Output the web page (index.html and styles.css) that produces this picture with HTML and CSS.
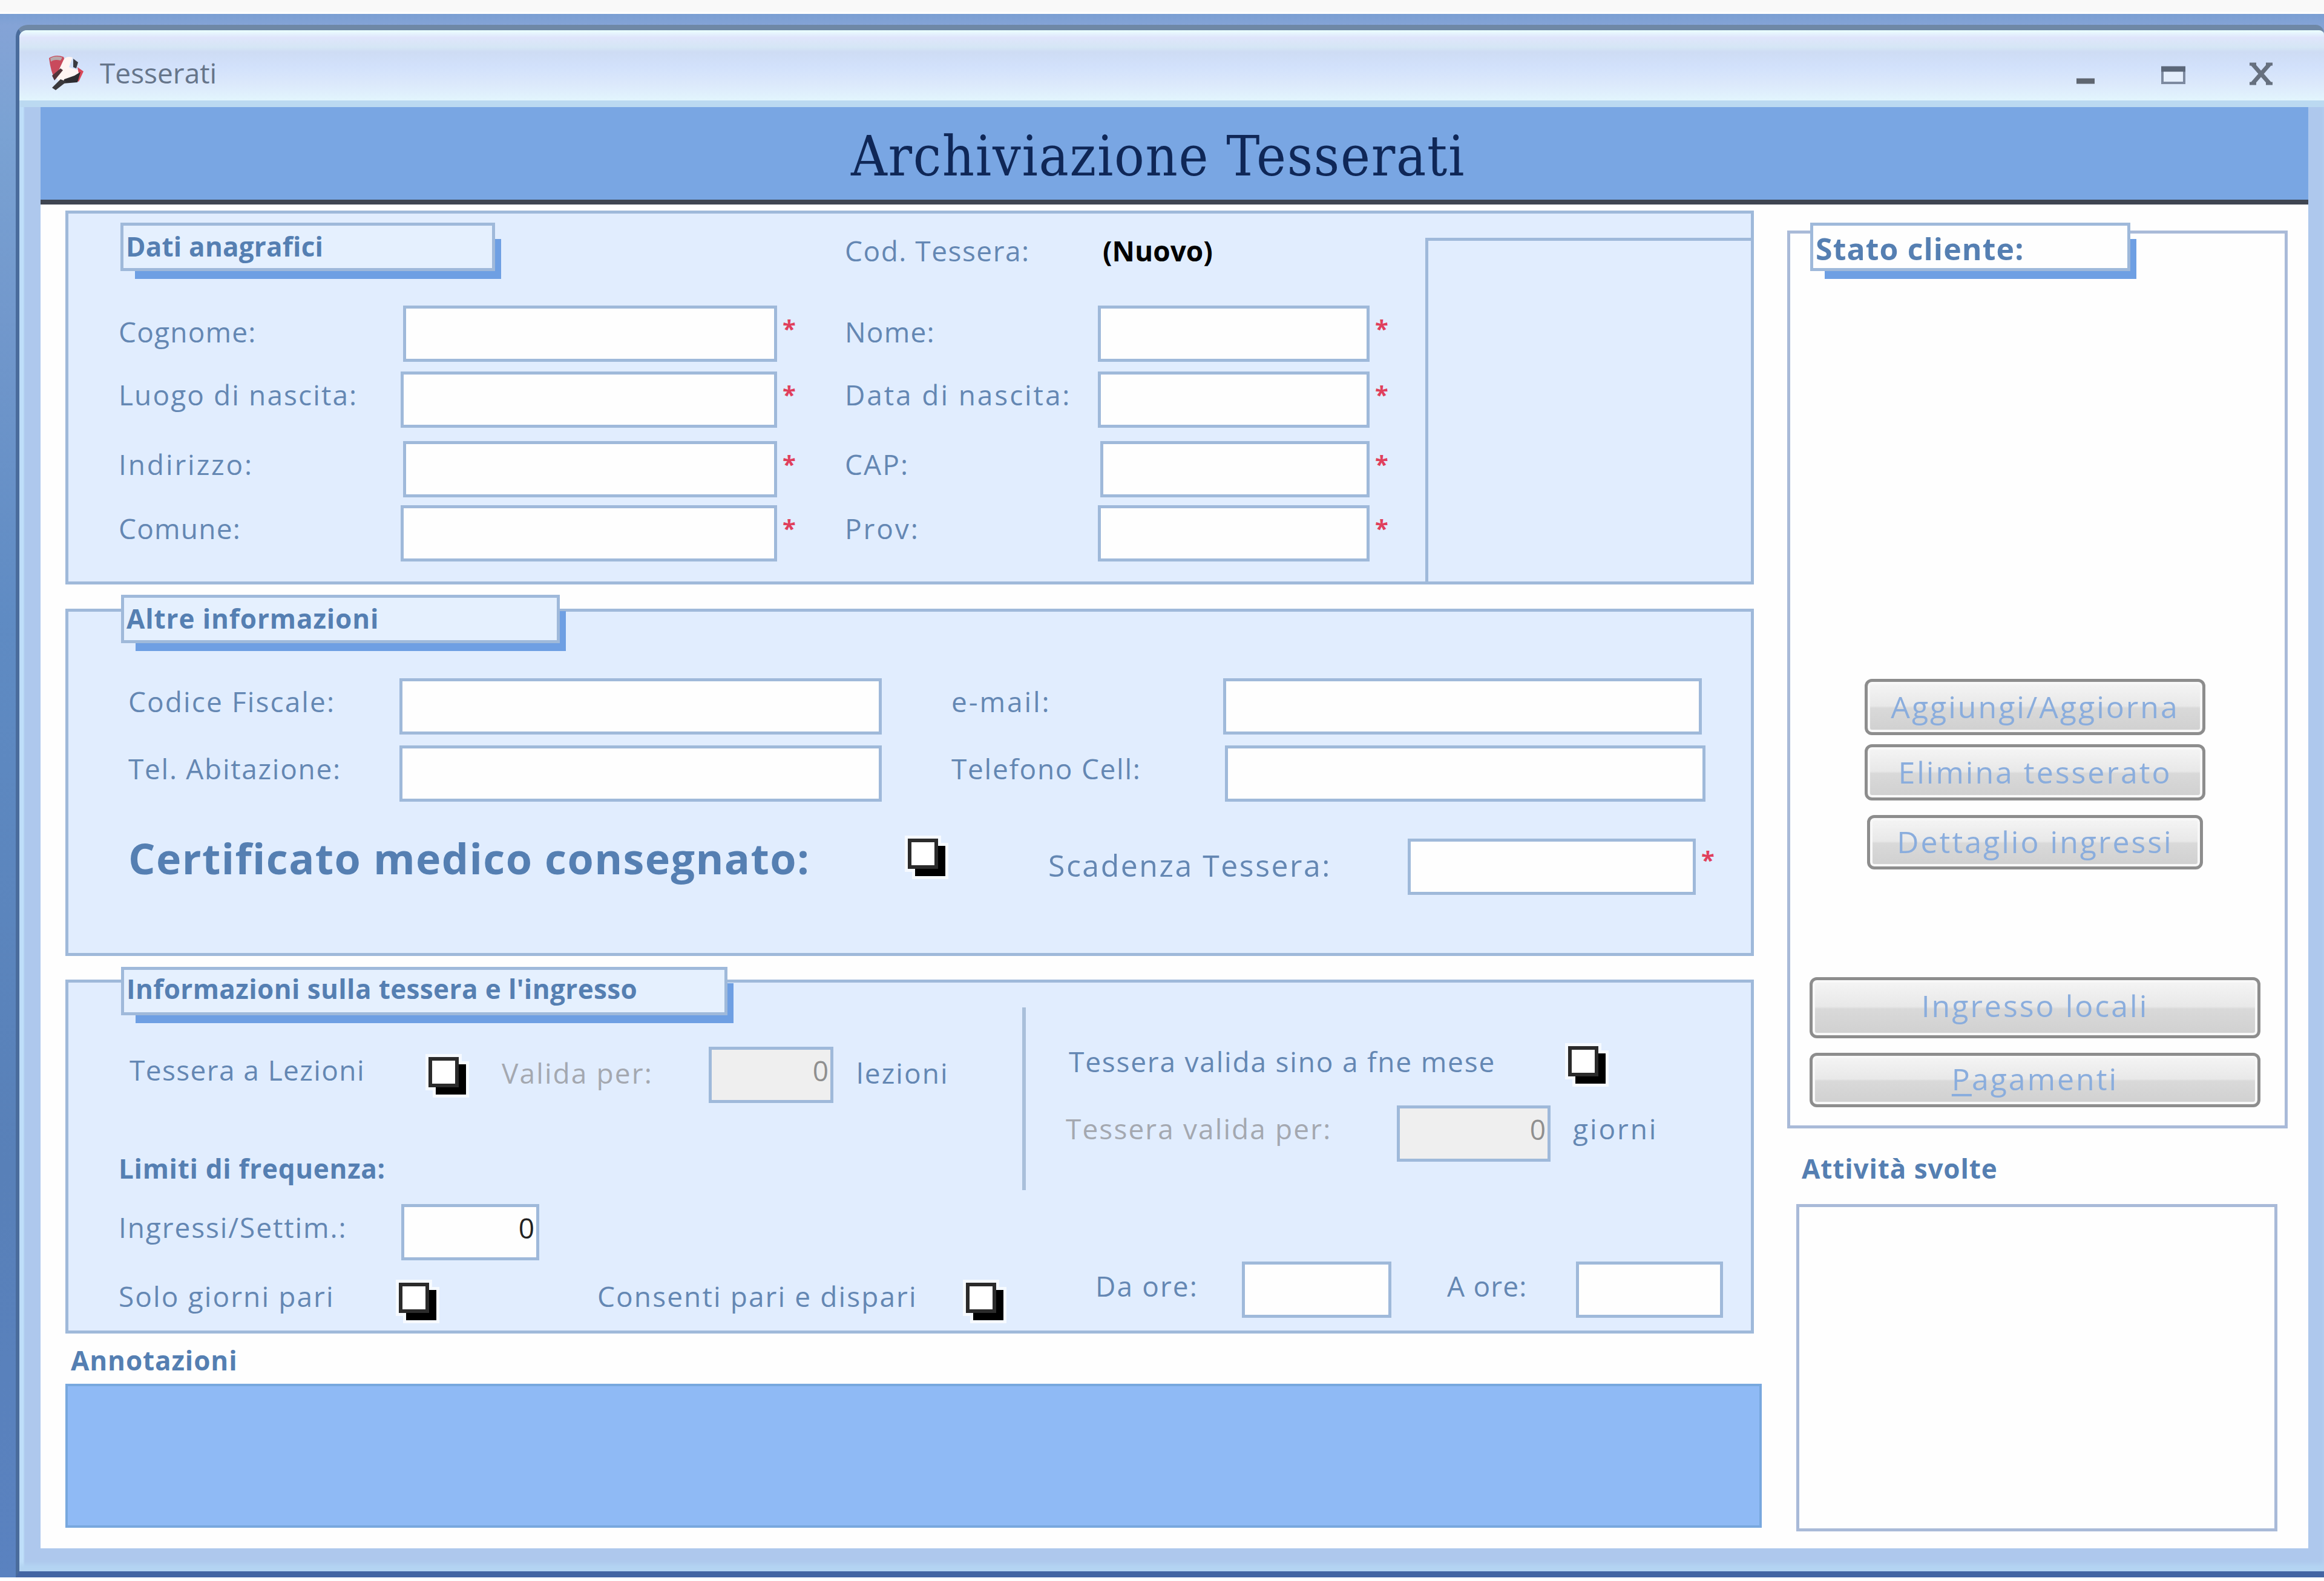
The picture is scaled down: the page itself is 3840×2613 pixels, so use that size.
FILE: index.html
```
<!DOCTYPE html>
<html lang="it">
<head>
	<meta charset="utf-8">
	<title>Tesserati</title>
	<link rel="stylesheet" href="styles.css">
</head>
<body>
	<div class="desktop">
		<div class="window">
			<div class="titlebar">
				<svg class="app-icon" viewBox="0 0 60 60">
					<path d="M3 7 Q14 0 27 5 L34 28 L12 40 Q6 30 3 7Z" fill="#c94a5c"/>
					<path d="M5 7 Q14 2 25 6 L22 11 Q12 8 6 13Z" fill="#b9a9ac"/>
					<path d="M27 10 Q31 3 42 6 L36 22 L54 28 L50 42 L20 46 L14 38Z" fill="#fff5f3"/>
					<path d="M43 8 L51 14 L48 24 L43 22Z" fill="#3a3a40"/>
					<path d="M50 22 L60 29 L52 46 L44 42 L52 32Z" fill="#d8485a"/>
					<path d="M28 42 L45 36 L55 30 L50 47 L26 49Z" fill="#2e2c30"/>
					<path d="M22 42 L32 46 L14 60 L8 56Z" fill="#3a383c"/>
					<path d="M8 36 L22 24 L26 27 L12 44Z" fill="#51343a"/>
				</svg>
				<span class="caption">Tesserati</span>
				<div class="controls">
					<svg class="ctl" viewBox="0 0 44 44"><path d="M7 34H37" stroke="#5f6670" stroke-width="9"/></svg>
					<svg class="ctl" viewBox="0 0 44 44"><path d="M4 14H40V37H4Z" fill="#e4eefc" stroke="#7d8aa0" stroke-width="4"/><path d="M2 14H42" stroke="#5b6779" stroke-width="9"/></svg>
					<svg class="ctl" viewBox="0 0 44 44"><path d="M8 6L36 38M36 6L8 38" stroke="#66707f" stroke-width="7"/><path d="M3 6H14M30 6H41M3 38H14M30 38H41" stroke="#66707f" stroke-width="5"/></svg>
				</div>
			</div>
			<div class="client">
				<h1>Archiviazione Tesserati</h1>
				<div class="form">
					<div class="left">
						<section class="panel personal">
							<h2 class="tag tag-personal">Dati anagrafici</h2>
							<label class="code-label">Cod. Tessera:</label>
							<b class="code">(Nuovo)</b>

							<label class="tight first start">Cognome:</label>
							<div class="field shift"></div>
							<i class="star">*</i>
							<label class="tight first">Nome:</label>
							<div class="field"></div>
							<i class="star">*</i>

							<label class="start">Luogo di nascita:</label>
							<div class="field"></div>
							<i class="star">*</i>
							<label class="wide">Data di nascita:</label>
							<div class="field"></div>
							<i class="star">*</i>

							<label class="wide start">Indirizzo:</label>
							<div class="field shift"></div>
							<i class="star">*</i>
							<label>CAP:</label>
							<div class="field shift"></div>
							<i class="star">*</i>

							<label class="tight start">Comune:</label>
							<div class="field"></div>
							<i class="star">*</i>
							<label class="wide">Prov:</label>
							<div class="field"></div>
							<i class="star">*</i>

							<div class="photo"></div>
						</section>

						<section class="panel other">
							<h2 class="tag tag-other">Altre informazioni</h2>
							<div class="row row-tax">
								<label>Codice Fiscale:</label>
								<div class="field tax"></div>
								<label class="second wide">e-mail:</label>
								<div class="field email"></div>
							</div>
							<div class="row row-phone">
								<label class="phone">Tel. Abitazione:</label>
								<div class="field tax"></div>
								<label class="second phone">Telefono Cell:</label>
								<div class="field mobile"></div>
							</div>
							<div class="row row-medical">
								<label class="medical">Certificato medico consegnato:</label>
								<div class="check"></div>
								<label class="expiry">Scadenza Tessera:</label>
								<div class="field expiry-date"></div>
								<i class="star">*</i>
							</div>
						</section>

						<section class="panel access">
							<h2 class="tag tag-access">Informazioni sulla tessera e l'ingresso</h2>
							<div class="split">
								<div class="lessons">
									<div class="row">
										<label class="by-lesson">Tessera a Lezioni</label>
										<div class="check"></div>
										<label class="valid off">Valida per:</label>
										<div class="field off count">0</div>
										<label class="unit">lezioni</label>
									</div>
									<h3>Limiti di frequenza:</h3>
									<div class="row row-weekly">
										<label>Ingressi/Settim.:</label>
										<div class="field weekly">0</div>
									</div>
								</div>
								<div class="divider"></div>
								<div class="period">
									<div class="row row-month">
										<label>Tessera valida sino a fne mese</label>
										<div class="check"></div>
									</div>
									<div class="row row-days">
										<label class="off">Tessera valida per:</label>
										<div class="field off days">0</div>
										<label class="unit wide">giorni</label>
									</div>
								</div>
							</div>
							<div class="row row-hours">
								<label class="even">Solo giorni pari</label>
								<div class="check"></div>
								<label class="both">Consenti pari e dispari</label>
								<div class="check"></div>
								<label class="from">Da ore:</label>
								<div class="field from-time"></div>
								<label class="to tight">A ore:</label>
								<div class="field to-time"></div>
							</div>
						</section>

						<h3 class="notes-title">Annotazioni</h3>
						<div class="notes"></div>
					</div>

					<div class="right">
						<div class="status">
							<h2 class="tag tag-status">Stato cliente:</h2>
							<div class="btn add">Aggiungi/Aggiorna</div>
							<div class="btn delete">Elimina tesserato</div>
							<div class="btn detail">Dettaglio ingressi</div>
							<div class="btn entry">Ingresso locali</div>
							<div class="btn payments"><u>P</u>agamenti</div>
						</div>
						<h3 class="activity-title">Attività svolte</h3>
						<div class="activity"></div>
					</div>
				</div>
			</div>
		</div>
	</div>
</body>
</html>
```
FILE: styles.css
```
* {
	box-sizing: border-box;
}
body {
	margin: 0;
	padding-top: 23px;
	height: 2613px;
	overflow: hidden;
	background: linear-gradient(#f9f9f9 18px, #ffffff 23px);
	font-family: "Open Sans", "Noto Sans", sans-serif;
	font-size: 46px;
	color: #6487b3;
}
h1, h2, h3 {
	margin: 0;
}
.desktop {
	height: 2584px;
	padding: 18px 0 0 26px;
	background: linear-gradient(#7b9fd3, #84a3d6 18px, #7aa2d3 200px, #7298cc 500px, #5f8bc3 1000px, #5880b8 1900px, #5a82c0);
}
.window {
	height: 2566px;
	border-top: 9px solid #6f88a6;
	border-left: 6px solid #4a6c9c;
	border-bottom: 10px solid #4365a3;
	border-radius: 20px 14px 0 0;
	padding: 0 26px 38px 35px;
	background: linear-gradient(90deg, #c0e0fa 6px, #aec8ed 9px);
	box-shadow: inset 0 -12px 6px #b4d4f2;
}
.titlebar {
	display: flex;
	align-items: flex-start;
	height: 127px;
	margin: 0 -26px 0 -35px;
	border-bottom: 11px solid #bbd9f1;
	border-radius: 12px 8px 0 0;
	padding: 0 82px 0 46px;
	background: linear-gradient(#ebffff, #dfe5fb 12px, #d5e6f5 28px, #cedcf4 36px, #d2e1fb 60px, #dce9fb 90px, #e2f5fd);
}
.app-icon {
	width: 60px;
	height: 60px;
	margin-top: 39px;
}
.caption {
	margin: 32px auto 0 27px;
	line-height: 76px;
	color: #66758a;
}
.controls {
	display: flex;
	gap: 101px;
	margin-top: 50px;
}
.ctl {
	width: 44px;
	height: 44px;
}
.client {
	height: 2382px;
	background: #fefefe;
}
h1 {
	height: 161px;
	border-bottom: 8px solid #3f4551;
	background: #79a6e3;
	color: #0f2757;
	font: 92px/163px "DejaVu Serif Condensed", "DejaVu Serif", serif;
	letter-spacing: 1.7px;
	text-align: center;
	padding-right: 54px;
}
.form {
	display: flex;
	padding: 10px 0 0 41px;
}
.left {
	width: 2803px;
	margin-right: 42px;
}
.right {
	width: 827px;
	padding-top: 33px;
}
.panel {
	width: 2790px;
	border: 5px solid #9fb9da;
	background: #e1edfe;
}
label {
	line-height: 76px;
	letter-spacing: 2.1px;
	white-space: nowrap;
	flex: none;
}
.tight {
	letter-spacing: 1.2px;
}
.wide {
	letter-spacing: 2.9px;
}
.field {
	height: 93px;
	border: 5px solid #9fb9da;
	background: #fefefe;
	color: #222;
	line-height: 68px;
	text-align: right;
	padding-right: 3px;
	flex: none;
}
.field.off {
	background: #efefef;
	color: #8f8f8f;
}
label.off {
	color: #a4a8b0;
}
.star {
	color: #e0405c;
	font-size: 40px;
	font-style: normal;
	font-weight: bold;
	line-height: 76px;
	padding-left: 9px;
}
.tag {
	height: 80px;
	border: 5px solid #9fb9da;
	padding-left: 4px;
	background: #e5f0fe;
	box-shadow: 17px 20px 0 -7px #6e9fe3;
	font-size: 44px;
	line-height: 68px;
	letter-spacing: 0.9px;
	color: #557fb2;
	white-space: nowrap;
}
h3 {
	font-size: 44px;
	line-height: 60px;
	letter-spacing: 0.9px;
	color: #557fb2;
}
/* white box with a hard black shadow */
.check {
	width: 50px;
	height: 50px;
	flex: none;
	border: 6px solid #2b2b2b;
	background: #fff;
	box-shadow: 12px 12px 0 #000, 12px 12px 0 5px #f6faff, 0 0 0 5px #f6faff;
}
.row {
	display: flex;
	align-items: flex-start;
}

/* Dati anagrafici */
.personal {
	display: grid;
	grid-template-columns: 466px 622px 112px 418px 449px 92px 543px;
	grid-template-rows: 152px 109px 115px 106px;
	align-items: start;
	height: 618px;
	padding-left: 83px;
}
.tag-personal {
	grid-column: 1 / 3;
	width: 619px;
	margin: 15px 0 0 3px;
	letter-spacing: 0.2px;
}
.code-label {
	grid-column: 4;
	margin-top: 23px;
	letter-spacing: 1.5px;
}
.code {
	padding-left: 8px;
	margin-top: 23px;
	line-height: 76px;
	color: #000;
}
.start {
	grid-column: 1;
}
.first {
	padding-top: 5px;
}
.personal .shift {
	margin-left: 4px;
}
.photo {
	grid-column: 7;
	grid-row: 1 / 6;
	height: 573px;
	margin-top: 40px;
	border: 5px solid #9fb9da;
}

/* Altre informazioni */
.other {
	height: 574px;
	margin-top: 40px;
	padding-left: 99px;
}
.tag-other {
	width: 725px;
	margin: -28px 0 0 -12px;
}
.row-tax {
	margin-top: 58px;
}
.row-phone {
	margin-top: 18px;
}
.row-medical {
	margin-top: 61px;
}
.other label {
	width: 448px;
}
.tax {
	width: 797px;
}
.other .second {
	width: 449px;
	margin-left: 115px;
}
.other .phone {
	letter-spacing: 1.7px;
}
.email {
	width: 791px;
}
.mobile {
	width: 794px;
	margin-left: 3px;
}
.other .medical {
	width: 1288px;
	font-size: 70px;
	font-weight: bold;
	line-height: 64px;
	letter-spacing: 1.4px;
	color: #557fb2;
}
.other .expiry {
	width: 594px;
	margin-left: 182px;
	font-size: 50px;
	line-height: 88px;
	letter-spacing: 2.5px;
}
.expiry-date {
	width: 476px;
}
.row-medical .star {
	line-height: 70px;
}

/* Informazioni sulla tessera */
.access {
	height: 585px;
	margin-top: 39px;
}
.tag-access {
	width: 1002px;
	margin: -26px 0 0 87px;
	line-height: 62px;
	letter-spacing: 0.4px;
}
.split {
	display: flex;
	align-items: flex-start;
	margin-top: -13px;
}
.lessons {
	width: 1576px;
	padding: 65px 0 0 83px;
}
.by-lesson {
	width: 512px;
	padding-left: 18px;
	letter-spacing: 1.4px;
}
.lessons .check {
	margin-top: 17px;
}
.valid {
	width: 413px;
	padding: 5px 0 0 71px;
}
.count {
	width: 206px;
}
.lessons .unit {
	padding: 5px 0 0 38px;
}
.lessons h3 {
	margin-top: 78px;
	letter-spacing: 0.7px;
}
.row-weekly {
	margin-top: 29px;
}
.row-weekly label {
	width: 467px;
	letter-spacing: 1.9px;
}
.weekly {
	width: 228px;
}
.divider {
	width: 6px;
	height: 302px;
	background: #a9bfda;
}
.period {
	padding-top: 51px;
}
.row-month label {
	width: 896px;
	padding-left: 71px;
	letter-spacing: 1.8px;
}
.row-month .check {
	margin-top: 13px;
}
.row-days {
	margin-top: 35px;
}
.row-days label {
	width: 613px;
	padding-left: 66px;
}
.days {
	width: 254px;
}
.row-days .unit {
	width: auto;
	padding-left: 37px;
}
.row-hours {
	padding-left: 83px;
	margin-top: 2px;
}
.row-hours .check {
	margin-top: 35px;
}
.even {
	width: 463px;
	padding-top: 19px;
}
.both {
	width: 887px;
	padding: 19px 0 0 278px;
}
.from {
	width: 406px;
	padding: 2px 0 0 164px;
}
.from-time {
	width: 247px;
}
.to {
	width: 305px;
	padding: 2px 0 0 92px;
}
.to-time {
	width: 243px;
}

/* Annotazioni */
.notes-title {
	margin: 14px 0 9px 9px;
}
.notes {
	height: 238px;
	border: 4px solid #78a8de;
	background: #8fbaf5;
}

/* Stato cliente */
.status {
	display: flex;
	flex-direction: column;
	align-items: center;
	height: 1484px;
	border: 5px solid #a9bad8;
	background: #fefefe;
}
.tag-status {
	align-self: flex-start;
	width: 529px;
	margin: -18px 0 0 33px;
	background: #fefefe;
	font-size: 50px;
	line-height: 76px;
	letter-spacing: 1.1px;
}
.btn {
	width: 563px;
	height: 93px;
	border: 5px solid #8d8d8d;
	border-radius: 12px;
	background: linear-gradient(#f5f5f5, #e8e8e8 48%, #d9d9d9 52%, #d0d0d0);
	box-shadow: inset 0 0 0 4px #f8f8f8;
	color: #8aaddd;
	font-size: 50px;
	line-height: 82px;
	letter-spacing: 3px;
	text-align: center;
	margin-right: 8px;
	flex: none;
}
.btn u {
	text-decoration-thickness: 4px;
	text-underline-offset: 6px;
}
.add {
	margin-top: 674px;
}
.delete {
	margin-top: 15px;
}
.detail {
	width: 555px;
	height: 90px;
	margin-top: 24px;
	line-height: 78px;
}
.entry {
	width: 745px;
	height: 101px;
	margin-top: 178px;
	line-height: 84px;
}
.payments {
	width: 745px;
	height: 90px;
	margin-top: 24px;
	line-height: 76px;
}
.activity-title {
	margin: 36px 0 29px 24px;
}
.activity {
	width: 795px;
	height: 541px;
	margin-left: 15px;
	border: 5px solid #a9bad8;
}
```
